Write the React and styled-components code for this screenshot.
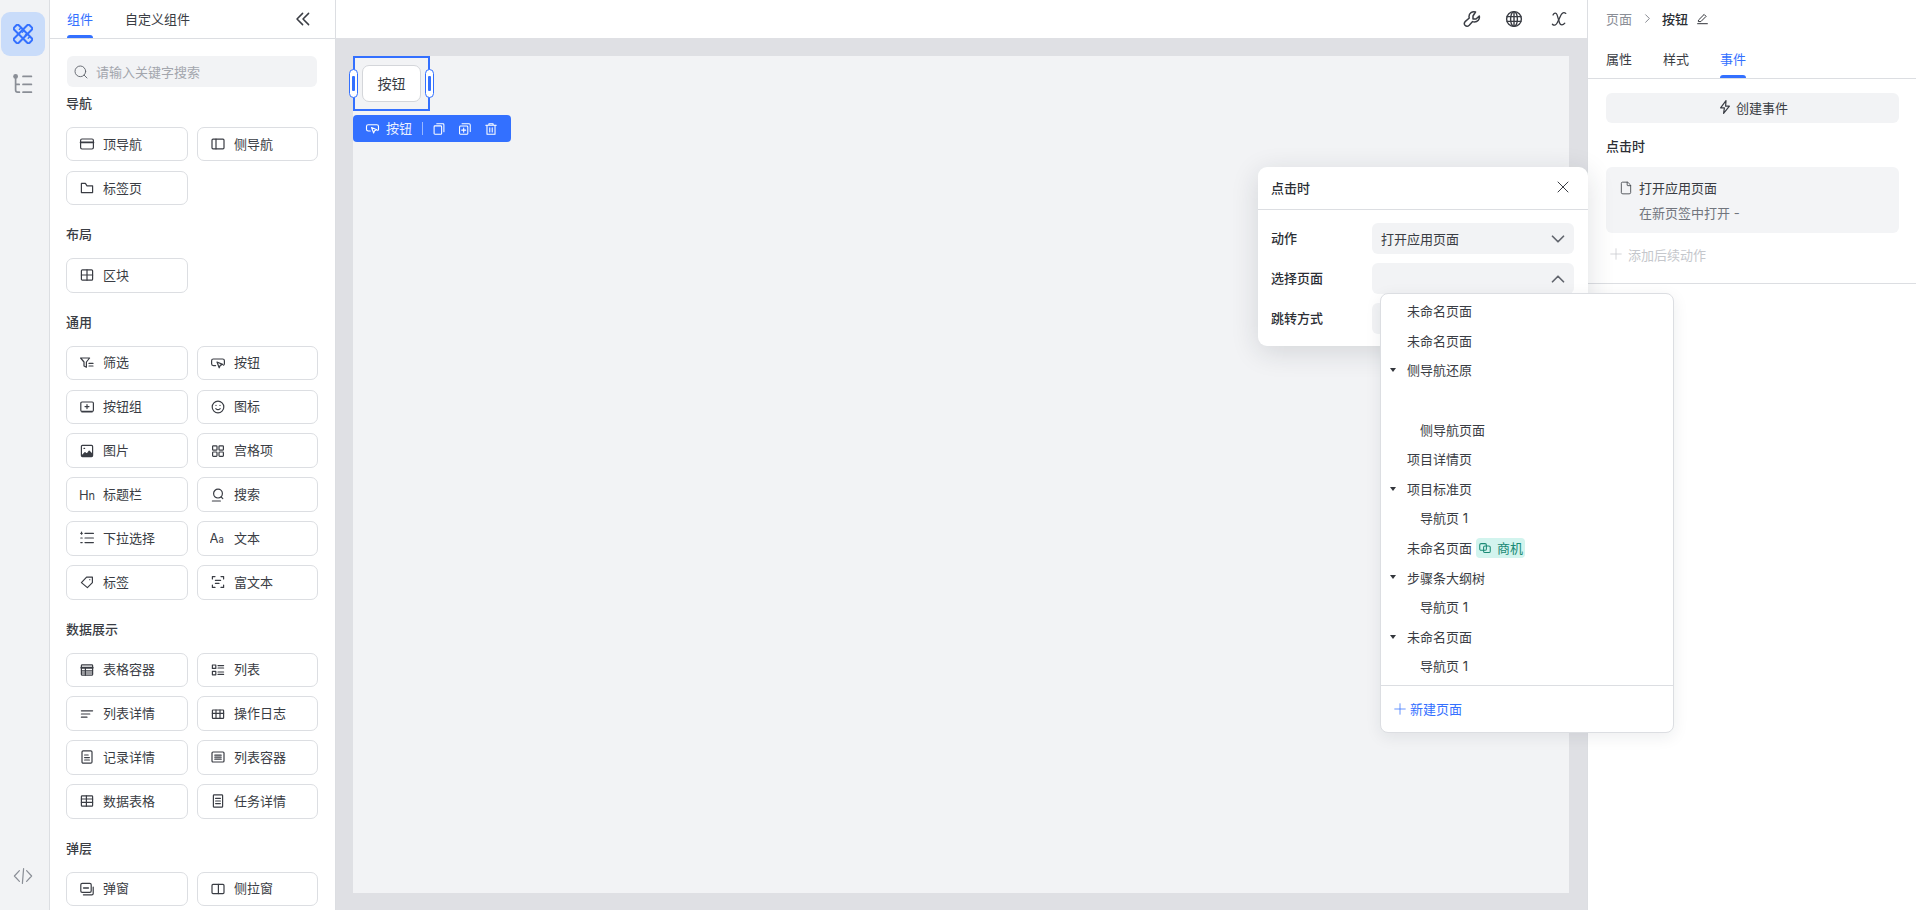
import React from "react";
import styled, { createGlobalStyle } from "styled-components";
import { ChevronRight, ChevronDown, ChevronUp, X, Plus, File, Search } from "lucide-react";

const Global = createGlobalStyle`
  html, body { margin: 0; padding: 0; height: 100%; overflow: hidden; background: #fff; }
  body { font-family: Inter, "Noto Sans CJK SC", sans-serif; font-size: 13px; color: #3a3d44; }
  * { box-sizing: border-box; }
`;

const blue = "#3370ff";

const Page = styled.div`display: flex; width: 1916px; height: 910px; overflow: hidden; position: relative;`;
const Rail = styled.nav`width: 50px; flex: none; background: #f2f3f5; border-right: 1px solid #dcdee2; display: flex; flex-direction: column; align-items: center; padding: 12px 4px 12px 1px;`;
const RailButton = styled.div`
  width: 44px; height: 44px; border-radius: 9px; display: flex; align-items: center; justify-content: center;
  margin-bottom: ${p => (p.$last ? 0 : 6)}px; background: ${p => (p.$active ? "#c9dcfa" : "transparent")}; color: ${p => (p.$active ? blue : "#8a8e96")};
`;
const RailSpacer = styled.div`flex: 1;`;

const Panel = styled.aside`width: 286px; flex: none; background: #fff; border-right: 1px solid #dcdee2; overflow: hidden;`;
const PanelTabs = styled.div`height: 39px; border-bottom: 1px solid #dcdee2; display: flex; padding: 0 17px; gap: 32px; position: relative;`;
const Tab = styled.div`
  height: 38px; line-height: 38px; font-size: 13px; position: relative; color: ${p => (p.$active ? blue : "#3a3d44")};
  &::after { content: ""; display: ${p => (p.$active ? "block" : "none")}; position: absolute; left: 0; right: 0; bottom: 0; height: 3px; background: ${blue}; border-radius: 3px 3px 0 0; }
`;
const Collapse = styled.div`position: absolute; left: 245px; top: 11px; color: #3a3d44; display: flex;`;
const SearchBox = styled.div`margin: 17px 18px 6px 17px; height: 31px; border-radius: 6px; background: #f2f3f5; display: flex; align-items: center; gap: 7px; padding: 0 6px; color: #a3a6ad; font-size: 13px; svg { color: #62666e; }`;
const Section = styled.section`padding: 0 17px 0 16px; margin-bottom: 19px;`;
const Heading = styled.h3`margin: 0 0 14px; height: 20px; line-height: 20px; font-size: 13px; font-weight: 500; color: #3a3d44;`;
const Grid = styled.div`display: grid; grid-template-columns: 122px 121px; column-gap: 9px; row-gap: 9.5px;`;
const Comp = styled.div`height: 34.4px; border: 1px solid #dcdee2; border-radius: 7px; display: flex; align-items: center; padding-left: 12px; gap: 8px; color: #3a3d44; background: #fff; font-size: 13px; svg { flex: none; }`;
const CompLabel = styled.span`margin-bottom: 2px;`;

const Main = styled.main`flex: 1; display: flex; flex-direction: column; min-width: 0;`;
const TopBar = styled.div`height: 38px; flex: none; background: #fff; display: flex; justify-content: flex-end; align-items: center; gap: 24px; padding-right: 19px; color: #3a3d44;`;
const VariableIcon = styled.svg`margin-left: 3px;`;
const Stage = styled.div`flex: 1; background: #dfe0e4; padding: 18px 18px 17px 17px;`;
const Canvas = styled.div`height: 100%; background: #f2f3f5; position: relative;`;
const Selection = styled.div`position: absolute; left: 0; top: 0; width: 77px; height: 55px; border: 2px solid ${blue}; display: flex; align-items: center; justify-content: center;`;
const CanvasButton = styled.div`width: 59px; height: 37px; padding-bottom: 2px; background: #fff; border: 1px solid #d4d6da; border-radius: 7px; display: flex; align-items: center; justify-content: center; font-size: 14px; color: #3a3d44;`;
const Handle = styled.span`
  position: absolute; top: 11px; width: 9px; height: 29px; border-radius: 5px; background: #fff; border: 1px solid ${blue};
  ${p => (p.$side === "left" ? "left: -6px;" : "right: -6px;")}
  &::after { content: ""; position: absolute; left: 2px; top: 6px; width: 3px; height: 15px; background: ${blue}; border-radius: 1px; }
`;
const SelBar = styled.div`position: absolute; left: 0; top: 59px; width: 158px; height: 27px; background: ${blue}; border-radius: 4px; display: flex; align-items: center; padding-left: 12px; color: #fff; font-size: 13px;`;
const SelLabel = styled.span`margin: 0 10px 2px 6px; color: #eaf0ff;`;
const SelDivider = styled.i`width: 1px; height: 13px; background: rgba(255,255,255,.5); margin-right: 9px;`;
const SelIcon = styled.span`display: flex; margin-right: 12px;`;

const Inspector = styled.aside`width: 329px; flex: none; background: #fff; border-left: 1px solid #dcdee2;`;
const Crumbs = styled.div`height: 37px; display: flex; align-items: center; padding-left: 18px; color: #8a8e96; font-size: 13px;`;
const CrumbCurrent = styled.span`color: #2b2e34; font-weight: 500; margin: 0 8px 0 0;`;
const CrumbSep = styled.span`display: flex; margin: 0 7px 0 8px; color: #6a6e76;`;
const PencilBox = styled.span`display: flex; color: #2b2e34;`;
const InspectorTabs = styled.div`height: 42px; border-bottom: 1px solid #dcdee2; display: flex; padding: 3px 18px 0; gap: 31px;`;
const InspectorBody = styled.div`padding: 14px 17px 0 18px; height: 205px; border-bottom: 1px solid #dcdee2;`;
const CreateButton = styled.div`height: 30px; padding-bottom: 2px; background: #f2f3f5; border-radius: 6px; display: flex; align-items: center; justify-content: center; gap: 3px; color: #3a3d44;`;
const EventTitle = styled.div`margin-top: 13px; height: 20px; line-height: 20px; color: #2b2e34; font-weight: 500;`;
const EventCard = styled.div`margin-top: 11px; height: 66px; background: #f3f4f6; border-radius: 6px; padding: 10px 13px; display: grid; grid-template-columns: 20px 1fr; column-gap: 0; row-gap: 4px; line-height: 20px; align-items: center;`;
const EventSub = styled.div`grid-column: 2; color: #71757d;`;
const AddAction = styled.div`margin-top: 11px; padding-left: 1px; display: flex; align-items: center; gap: 3px; color: #c5c7cc; height: 20px;`;

const Pop = styled.div`position: absolute; left: 1258px; top: 167px; width: 330px; height: 179px; background: #fff; border-radius: 9px; box-shadow: 0 6px 28px rgba(30,35,50,.14); z-index: 2;`;
const PopHead = styled.div`height: 43px; padding: 0 15px 2px 13px; border-bottom: 1px solid #dcdee2; display: flex; align-items: center; justify-content: space-between; color: #2b2e34; font-weight: 500;`;
const PopBody = styled.div`padding: 13px 14px 0 13px; display: grid; grid-template-columns: 101px 202px; row-gap: 9px; align-items: center;`;
const PopLabel = styled.div`color: #2b2e34; font-weight: 500; margin-bottom: 2px;`;
const Select = styled.div`height: 31px; background: #f2f3f5; border-radius: 6px; display: flex; align-items: center; justify-content: space-between; padding: 0 5px 0 9px; color: #3a3d44; svg { color: #62666e; }`;

const Menu = styled.div`position: absolute; left: 1380px; top: 293px; width: 294px; height: 440px; background: #fff; border: 1px solid #dcdee2; border-radius: 8px; z-index: 3; box-shadow: 0 4px 16px rgba(30,35,50,.08); padding-top: 2px;`;
const Item = styled.div`height: 29.6px; display: flex; align-items: center; padding-left: ${p => (p.$child ? 39 : 26)}px; position: relative; color: #3a3d44;`;
const Caret = styled.i`position: absolute; left: 9px; top: 13px; border-left: 3.5px solid transparent; border-right: 3.5px solid transparent; border-top: 4.5px solid #33363c;`;
const Badge = styled.span`margin-left: 4px; height: 20px; width: 49px; border-radius: 4px; background: #d2f4ee; color: #1a8a75; display: flex; align-items: center; justify-content: center; gap: 5px; font-size: 13px;`;
const MenuFoot = styled.div`margin-top: 4px; border-top: 1px solid #dcdee2; height: 47px; display: flex; align-items: center; padding-left: 10px; gap: 1px; color: ${blue};`;

const S = ({ children, size = 16, vb = 16, sw = 1.2 }) => (
  <svg width={size} height={size} viewBox={`0 0 ${vb} ${vb}`} fill="none" stroke="currentColor" strokeWidth={sw} strokeLinecap="round" strokeLinejoin="round">{children}</svg>
);
const tx = { fontSize: 11, fontFamily: "Inter, sans-serif", fill: "currentColor", stroke: "none" };

const ButtonIcon = ({ size }) => (
  <S size={size}>
    <path d="M5.6 10.6H3.4C2.4 10.6 1.6 9.8 1.6 8.8V5.8C1.6 4.8 2.4 4 3.4 4h9.2c1 0 1.8.8 1.8 1.8v3c0 .6-.3 1.1-.8 1.4" />
    <path d="M7 7l5.6 2.4-2.4 1-1 2.4z" />
  </S>
);
const Icons = {
  top: <S><rect x="1.6" y="3" width="12.8" height="10" rx="1.4" /><path d="M1.6 6.4h12.8" strokeWidth="1.8" /></S>,
  side: <S><rect x="2" y="3.2" width="12" height="9.6" rx="1" /><path d="M6 3.2v9.6" /></S>,
  folder: <S><path d="M2.4 3.4h4l1.6 2.4h5.6v6.8H2.4z" /></S>,
  block: <S><rect x="2.4" y="2.8" width="11.2" height="10.4" rx="1" /><path d="M8 2.8v10.4M2.4 8h11.2" /></S>,
  filter: <S><path d="M1.6 3h9L7.4 7v5.2L5 11V7z" /><path d="M10 8.4h4M10 11h4" /></S>,
  button: <ButtonIcon />,
  group: <S><rect x="1.8" y="3" width="12.6" height="9.4" rx="1.2" /><path d="M8 5.6v4M6 7.6h4" /><path d="M3 12.9h10" strokeWidth="1.4" /></S>,
  smile: <S><circle cx="8" cy="8" r="5.8" /><path d="M5.8 9.6c1.2 1.2 3.2 1.2 4.4 0M6 6.3v.2M10 6.3v.2" /></S>,
  image: <S><rect x="2.4" y="2.4" width="11.2" height="11.2" rx="1" /><path d="M3 12.6l3-3 2 1.6 2.2-3 3 3v1.4z" fill="currentColor" /><path d="M5 5.4h.6" /></S>,
  grid: <S><rect x="2.6" y="2.8" width="4.4" height="4.4" rx=".8" /><rect x="9" y="2.8" width="4.4" height="4.4" rx=".8" /><rect x="2.6" y="9" width="4.4" height="4.4" rx=".8" /><rect x="9" y="9" width="4.4" height="4.4" rx=".8" /></S>,
  hn: <svg width="16" height="16" viewBox="0 0 16 16"><text x="0" y="13" style={{ ...tx, fontSize: 13 }}>H</text><text x="9.5" y="13" style={{ ...tx, fontSize: 11 }}>n</text></svg>,
  search: <S><circle cx="8" cy="6.6" r="4.4" /><path d="M11.2 10l1.6 1.6M2.4 14h8" /></S>,
  list: <S><path d="M6 3.4h8.4M6 8h8.4M6 12.6h8.4" /><path d="M1.8 3.4h1.4M1.8 8h1.4M1.8 12.6h1.4M2.6 2.2v2" /></S>,
  aa: <svg width="16" height="16" viewBox="0 0 16 16"><text x="-0.5" y="13" style={{ ...tx, fontSize: 13 }}>A</text><text x="8.5" y="13" style={{ ...tx, fontSize: 9.5 }}>a</text></svg>,
  tag: <S><path d="M2.4 8.6L7.6 3.2h5.8v5.4l-5 5z" /><path d="M10.8 5.6v.1" /></S>,
  rich: <S><path d="M2.4 5V2.6H5M11 2.6h2.6V5M13.6 11v2.4H11M5 13.4H2.4V11" /><path d="M5.4 6.4h5.2M5.4 9.4h3.6" /></S>,
  tableC: <S><rect x="2.4" y="2.8" width="11.2" height="10.4" rx=".8" /><path d="M2.4 5.8h11.2" strokeWidth="2" /><path d="M6.4 5.8v7.4M2.4 8.8h11.2M2.4 11h11.2" /></S>,
  listing: <S><rect x="2.4" y="3" width="3.4" height="3.4" /><rect x="2.4" y="9.4" width="3.4" height="3.4" /><path d="M8 3.6h5.6M8 6h5.6M8 10h5.6M8 12.4h5.6" /></S>,
  lines: <S><path d="M2.4 4.8h11.2M2.4 8h8.4M2.4 11.2h5.6" /></S>,
  log: <S><rect x="2.4" y="4" width="11.2" height="8.4" rx=".6" /><path d="M2.4 7.4h11.2M6 4v8.4M10 4v8.4" /></S>,
  record: <S><rect x="3" y="1.8" width="10" height="12.4" rx="1.2" /><path d="M5.6 6h3.6M5.6 8.6h4.8M5.6 11h4.8" /></S>,
  listC: <S><rect x="2" y="3" width="12" height="10" rx="1" /><path d="M4.8 6.2h6.4M4.8 8.2h6.4M4.8 10.2h6.4" /></S>,
  data: <S><rect x="2.4" y="2.8" width="11.2" height="10.4" rx=".8" /><path d="M2.4 6h11.2M2.4 9.4h11.2M7.4 2.8v10.4" /></S>,
  task: <S><rect x="3.4" y="1.8" width="9.2" height="12.4" rx=".8" /><path d="M5.6 5.4h4.8M5.6 8h4.8M5.6 10.6h4.8" /></S>,
  modal: <S><rect x="1.8" y="2.4" width="10.4" height="9" rx="1.4" /><path d="M4.4 13.8h8.4c.8 0 1.4-.6 1.4-1.4V6" /><path d="M4.6 7h4.8" strokeWidth="1.4" /></S>,
  drawer: <S><rect x="2" y="3.4" width="12" height="9.2" rx="1" /><path d="M8.4 3.4v9.2" /></S>,
};

const nav = [["top", "顶导航"], ["side", "侧导航"], ["folder", "标签页"]];
const general = [["filter", "筛选"], ["button", "按钮"], ["group", "按钮组"], ["smile", "图标"], ["image", "图片"], ["grid", "宫格项"], ["hn", "标题栏"], ["search", "搜索"], ["list", "下拉选择"], ["aa", "文本"], ["tag", "标签"], ["rich", "富文本"]];
const data = [["tableC", "表格容器"], ["listing", "列表"], ["lines", "列表详情"], ["log", "操作日志"], ["record", "记录详情"], ["listC", "列表容器"], ["data", "数据表格"], ["task", "任务详情"]];
const groups = [["导航", nav], ["布局", [["block", "区块"]]], ["通用", general], ["数据展示", data], ["弹层", [["modal", "弹窗"], ["drawer", "侧拉窗"]]]];

const pages = [
  { t: "未命名页面" }, { t: "未命名页面" }, { t: "侧导航还原", caret: true }, { t: "" },
  { t: "侧导航页面", child: true }, { t: "项目详情页" }, { t: "项目标准页", caret: true }, { t: "导航页 1", child: true },
  { t: "未命名页面", badge: "商机" }, { t: "步骤条大纲树", caret: true }, { t: "导航页 1", child: true },
  { t: "未命名页面", caret: true }, { t: "导航页 1", child: true },
];

export default function App() {
  return (
    <Page>
      <Global />
      <Rail>
        <RailButton $active>
          <svg width="20" height="20" viewBox="0 0 24 24" fill="none" stroke="currentColor" strokeWidth="2.4" strokeLinejoin="round" strokeLinecap="round">
            <g transform="rotate(45 12 12)">
              <rect x="-1" y="8.2" width="26" height="7.6" rx="2" />
              <path d="M5 8.2v3M10 8.2v3M15 8.2v3M20 8.2v3" strokeWidth="1.6" />
            </g>
            <g transform="rotate(-45 12 12)">
              <rect x="-1" y="8.2" width="26" height="7.6" rx="2" />
            </g>
          </svg>
        </RailButton>
        <RailButton>
          <svg width="22" height="22" viewBox="0 0 22 22" fill="none" stroke="currentColor" strokeWidth="1.7" strokeLinecap="round">
            <circle cx="3.6" cy="3.4" r="2.4" fill="currentColor" stroke="none" />
            <path d="M3.6 5v12c0 1.4.8 2.2 2 2.2h1.8M3.6 11.4h3.6M11 3.4h8.4M11 11.4h8.4M11 19.2h8.4" />
          </svg>
        </RailButton>
        <RailSpacer />
        <RailButton $last>
          <svg width="20" height="20" viewBox="0 0 20 20" fill="none" stroke="currentColor" strokeWidth="1.2" strokeLinecap="round" strokeLinejoin="round">
            <path d="M6.4 4.6L1.4 10l5 5.4M13.6 4.6l5 5.4-5 5.4M10.6 2.6L9.4 17.4" />
          </svg>
        </RailButton>
      </Rail>

      <Panel>
        <PanelTabs>
          <Tab $active>组件</Tab>
          <Tab>自定义组件</Tab>
          <Collapse>
            <svg width="16" height="16" viewBox="0 0 16 16" fill="none" stroke="currentColor" strokeWidth="1.5" strokeLinecap="round" strokeLinejoin="round">
              <path d="M7.6 2.4L2 8l5.6 5.6M13.6 2.4L8 8l5.6 5.6" />
            </svg>
          </Collapse>
        </PanelTabs>
        <SearchBox><Search size={16} strokeWidth={1.4} />请输入关键字搜索</SearchBox>
        {groups.map(([title, items]) => (
          <Section key={title}>
            <Heading>{title}</Heading>
            <Grid>
              {items.map(([icon, label]) => (
                <Comp key={label}>{Icons[icon]}<CompLabel>{label}</CompLabel></Comp>
              ))}
            </Grid>
          </Section>
        ))}
      </Panel>

      <Main>
        <TopBar>
          <svg width="18" height="18" viewBox="0 0 18 18" fill="none" stroke="currentColor" strokeWidth="1.5" strokeLinejoin="round">
            <path d="M12.5 2C9.2 1 6 3.2 6 6.4c0 .6.1 1.1.3 1.6L2.4 11.4C1 12.6 1 14.2 2 15.3c1.2 1.2 3 1.1 4.2-.1l3.4-3.6c.6.2 1.2.3 1.8.3 3.2 0 5.6-2.6 4.9-5.8L13 9h-3V6z" />
          </svg>
          <svg width="18" height="18" viewBox="0 0 18 18" fill="none" stroke="currentColor" strokeWidth="1.4">
            <circle cx="9" cy="9" r="7.4" /><ellipse cx="9" cy="9" rx="3.4" ry="7.4" /><path d="M9 1.6v14.8M1.6 6.6h14.8M1.6 11.4h14.8" />
          </svg>
          <VariableIcon width="18" height="18" viewBox="0 0 18 18" fill="none" stroke="currentColor" strokeWidth="1.3" strokeLinecap="round">
            <path d="M3 5C3.8 2.8 6.2 2.4 7 4.6L9.6 13c.8 2.4 3.4 2.4 5.2.2" />
            <path d="M15.8 3.4C13.8 1.8 12 3 11 5L7.4 12.6C6.2 15.4 3.8 15.8 2.4 14.2" />
          </VariableIcon>
        </TopBar>
        <Stage>
          <Canvas>
            <Selection>
              <CanvasButton>按钮</CanvasButton>
              <Handle $side="left" />
              <Handle $side="right" />
            </Selection>
            <SelBar>
              <ButtonIcon size={15} />
              <SelLabel>按钮</SelLabel>
              <SelDivider />
              <SelIcon>
                <S size={14}><rect x="2.4" y="4.4" width="8.6" height="9.6" rx="1" /><path d="M5.4 2h7.2c.6 0 1 .4 1 1v8" /></S>
              </SelIcon>
              <SelIcon>
                <S size={14}><rect x="1.8" y="4.6" width="9.4" height="9.4" rx="1" /><path d="M4.6 2h8c.8 0 1.4.6 1.4 1.4v7.4M6.5 7v4.6M4.2 9.3h4.6" /></S>
              </SelIcon>
              <SelIcon>
                <S size={14}><path d="M2 3.8h12M5.6 3.6V2h4.8v1.6M3.4 3.8V14h9.2V3.8M6.6 6.6v4.8M9.4 6.6v4.8" /></S>
              </SelIcon>
            </SelBar>
          </Canvas>
        </Stage>
      </Main>

      <Inspector>
        <Crumbs>
          页面
          <CrumbSep><ChevronRight size={15} strokeWidth={1.3} /></CrumbSep>
          <CrumbCurrent>按钮</CrumbCurrent>
          <PencilBox>
            <S size={13}><path d="M3.4 9.6L10 3l2.4 2.4-6.4 6.4H3.4zM2 14.4h12" /></S>
          </PencilBox>
        </Crumbs>
        <InspectorTabs>
          <Tab>属性</Tab>
          <Tab>样式</Tab>
          <Tab $active>事件</Tab>
        </InspectorTabs>
        <InspectorBody>
          <CreateButton>
            <S size={16} sw={1.2}><path d="M9 1.6L3.6 8.8h3.8L6.6 14.4 12.4 7.2H8.6z" /></S>
            创建事件
          </CreateButton>
          <EventTitle>点击时</EventTitle>
          <EventCard>
            <File size={14} strokeWidth={1.4} />
            <div>打开应用页面</div>
            <EventSub>在新页签中打开 -</EventSub>
          </EventCard>
          <AddAction><Plus size={18} strokeWidth={1} />添加后续动作</AddAction>
        </InspectorBody>
      </Inspector>

      <Pop>
        <PopHead>点击时<X size={20} strokeWidth={1.2} color="#3a3d44" /></PopHead>
        <PopBody>
          <PopLabel>动作</PopLabel>
          <Select>打开应用页面<ChevronDown size={22} strokeWidth={1.9} /></Select>
          <PopLabel>选择页面</PopLabel>
          <Select><span /><ChevronUp size={22} strokeWidth={1.9} /></Select>
          <PopLabel>跳转方式</PopLabel>
          <Select />
        </PopBody>
      </Pop>

      <Menu>
        {pages.map((p, i) => (
          <Item key={i} $child={p.child}>
            {p.caret && <Caret />}
            {p.t}
            {p.badge && (
              <Badge>
                <S size={14} sw={1.2}><rect x="2" y="3" width="7.6" height="7.6" rx="1.6" /><rect x="6.4" y="5.6" width="7.6" height="7.6" rx="1.6" /></S>
                {p.badge}
              </Badge>
            )}
          </Item>
        ))}
        <MenuFoot><Plus size={18} strokeWidth={1} />新建页面</MenuFoot>
      </Menu>
    </Page>
  );
}
